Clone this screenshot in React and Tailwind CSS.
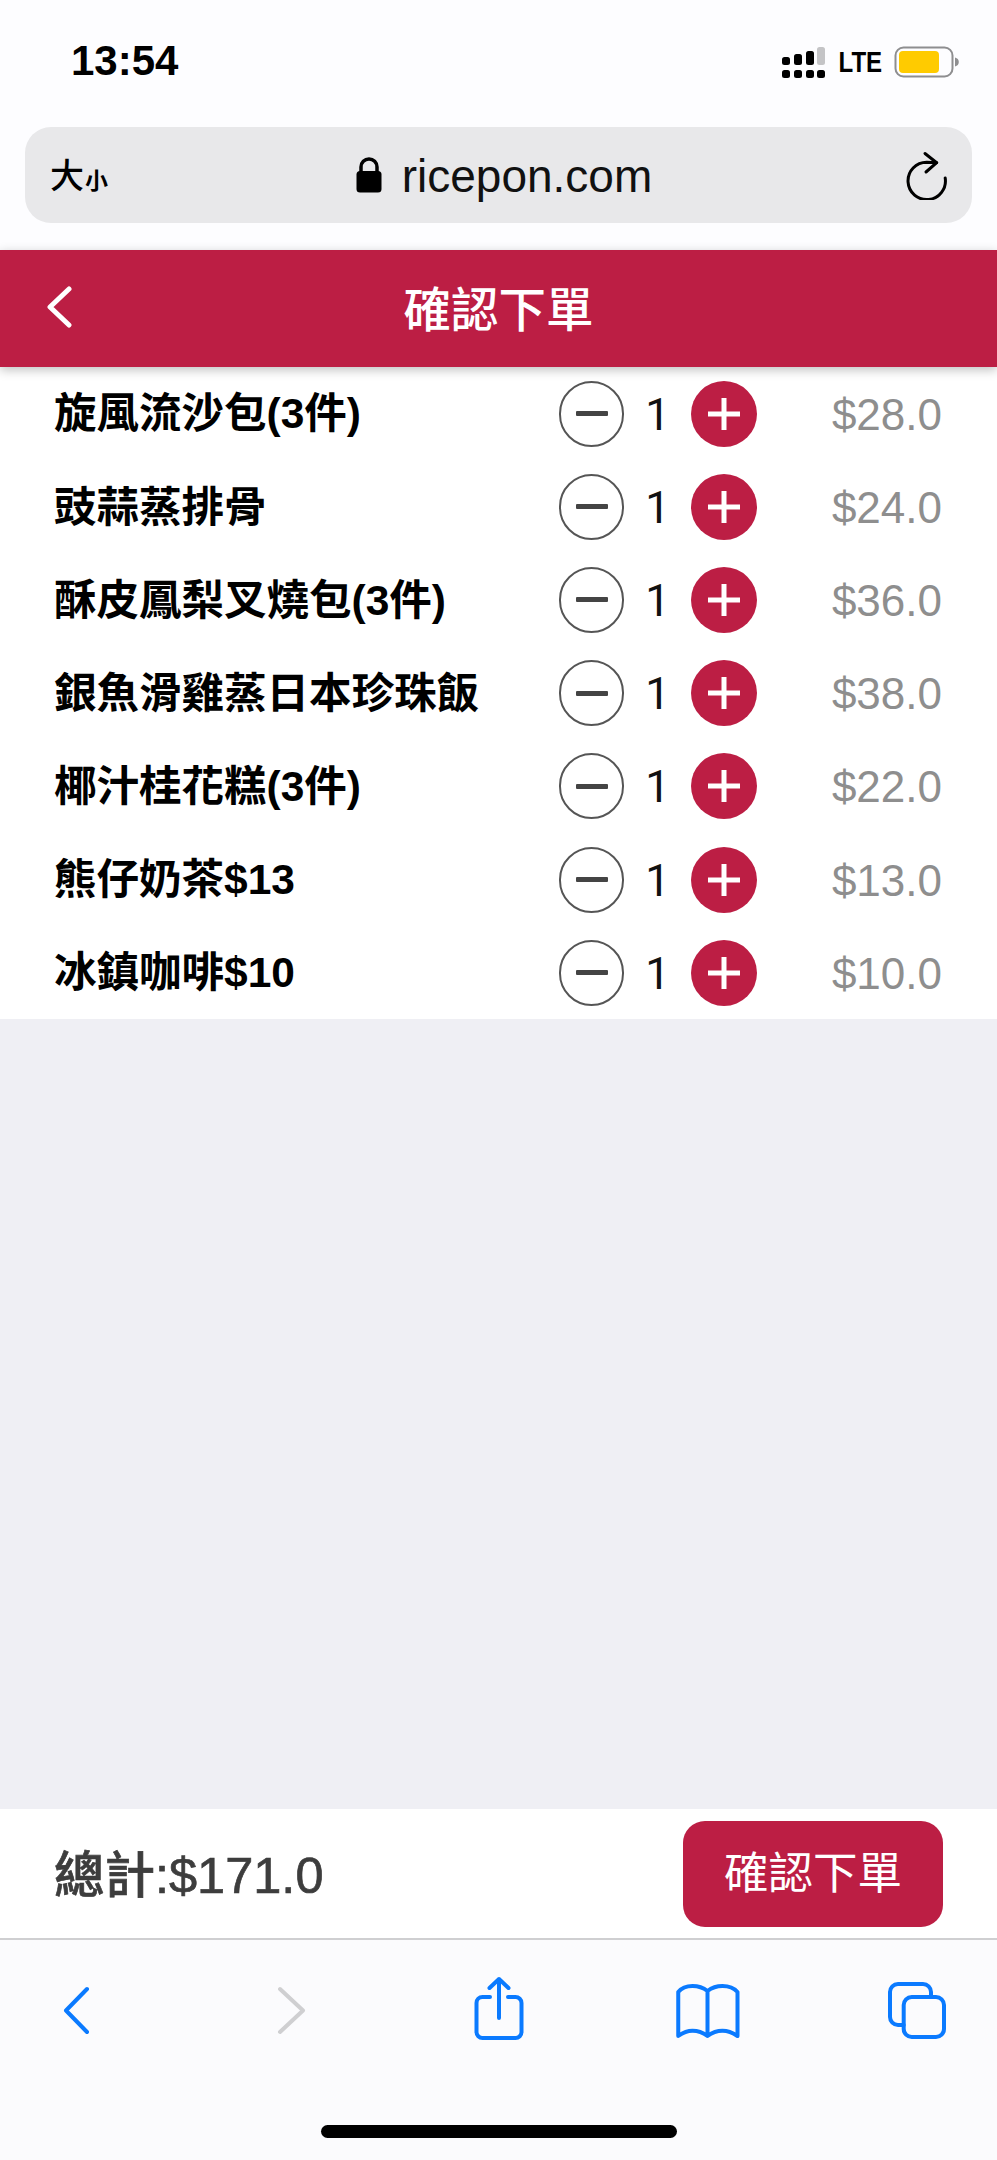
import React from 'react';

const SANS = "font-['Liberation_Sans','Noto_Sans_CJK_TC',sans-serif]";

const items = [
  { name: '旋風流沙包(3件)', price: '$28.0' },
  { name: '豉蒜蒸排骨', price: '$24.0' },
  { name: '酥皮鳳梨叉燒包(3件)', price: '$36.0' },
  { name: '銀魚滑雞蒸日本珍珠飯', price: '$38.0' },
  { name: '椰汁桂花糕(3件)', price: '$22.0' },
  { name: '熊仔奶茶$13', price: '$13.0' },
  { name: '冰鎮咖啡$10', price: '$10.0' },
];

const SignalIcon = () => (
  <svg width="44" height="31" viewBox="0 0 44 31" fill="#000">
    <rect x="0" y="10" width="8" height="8" rx="2.5" />
    <rect x="12" y="7" width="8" height="11" rx="2.5" />
    <rect x="24" y="4" width="8" height="14" rx="2.5" />
    <rect x="35" y="0" width="8" height="18" rx="2.5" fill="#c4c4c6" />
    <rect x="0" y="23" width="8" height="8" rx="2.5" />
    <rect x="12" y="23" width="8" height="8" rx="2.5" />
    <rect x="24" y="23" width="8" height="8" rx="2.5" />
    <rect x="35" y="23" width="8" height="8" rx="2.5" />
  </svg>
);

const BatteryIcon = () => (
  <svg width="65" height="32" viewBox="0 0 65 32">
    <rect x="1.5" y="1.5" width="57" height="29" rx="8" fill="none" stroke="#8e8e90" strokeWidth="2" />
    <rect x="5" y="5" width="40" height="22" rx="4" fill="#ffcb00" />
    <path d="M61 11.5c2.5.6 3.8 2.2 3.8 4.5s-1.3 3.9-3.8 4.5z" fill="#8e8e90" />
  </svg>
);

const LockIcon = () => (
  <svg width="26" height="36" viewBox="0 0 26 36">
    <path d="M5 16V10a8 8 0 0 1 16 0V16" fill="none" stroke="#000" strokeWidth="3.5" />
    <rect x="0.5" y="14" width="25" height="21.5" rx="3.5" fill="#000" />
  </svg>
);

const ReloadIcon = () => (
  <svg width="48" height="50" viewBox="0 0 48 50" fill="none" stroke="#000" strokeWidth="3" strokeLinecap="round" strokeLinejoin="round">
    <path d="M44.200 28A18.700 18.700 0 1 1 25.700 12.200L35.700 12.700" />
    <path d="M24 3.500 35.700 12.700 25 22" />
  </svg>
);

const MinusButton = () => (
  <div className="flex h-[66px] w-[65px] shrink-0 items-center justify-center rounded-full border-[2.5px] border-[#555555]">
    <div className="h-[5px] w-[32px] rounded-[1px] bg-[#444444]" />
  </div>
);

const PlusButton = () => (
  <div className="flex h-[66px] w-[66px] shrink-0 items-center justify-center rounded-full bg-[#bc1e44]">
    <svg width="32" height="32" viewBox="0 0 32 32" stroke="#fff" strokeWidth="5">
      <path d="M0 16h32M16 0v32" />
    </svg>
  </div>
);

const ItemRow = ({ name, price }) => (
  <div className="flex h-[93.2px] items-center pl-[54px] pr-[55px]">
    <div className="w-[505px] shrink-0 pt-[2px] text-[42.5px] leading-none font-bold whitespace-nowrap text-black">{name}</div>
    <MinusButton />
    <div className="w-[67px] shrink-0 pt-[2px] text-center font-['Roboto',sans-serif] text-[44px] leading-none text-[#111111]">1</div>
    <PlusButton />
    <div className="flex-1 pt-[2px] text-right text-[44px] leading-none text-[#8e8e8e]">{price}</div>
  </div>
);

const Toolbar = () => (
  <div className="flex h-[220px] shrink-0 flex-col bg-[#fbfbfd]">
    <div className="flex h-[185px] items-start justify-between px-[41px] pt-[36px]">
      <svg width="70" height="66" viewBox="0 0 70 66" fill="none" stroke="#0a7aff" strokeWidth="4" strokeLinecap="round" strokeLinejoin="round">
        <path d="M46 13 25 34.500 46 56" />
      </svg>
      <svg width="70" height="66" viewBox="0 0 70 66" fill="none" stroke="#cfcfd1" strokeWidth="4" strokeLinecap="round" strokeLinejoin="round">
        <path d="M28 13 51 34.500 28 56" />
      </svg>
      <svg width="70" height="66" viewBox="0 0 70 66" fill="none" stroke="#0a7aff" strokeWidth="4" strokeLinecap="round" strokeLinejoin="round">
        <path d="M26 21h-7.500a6 6 0 0 0-6 6v29a6 6 0 0 0 6 6h33a6 6 0 0 0 6-6V27a6 6 0 0 0-6-6H44" />
        <path d="M35 42V3M25.500 12 35 3l9.500 9" />
      </svg>
      <svg width="70" height="66" viewBox="0 0 70 66" fill="none" stroke="#0a7aff" strokeWidth="4" strokeLinecap="round" strokeLinejoin="round">
        <path d="M32.500 60V15C28 11.500 23 10 17.500 10 11 10 6.500 12 3.250 16V60C8 56.500 12 54.700 17.500 54.700 23 54.700 28 56.500 32.500 60 37 56.500 42 54.700 47.500 54.700 53 54.700 57.500 56.500 62.500 60V16C59 12 54 10 47.500 10 42 10 37 11.500 32.500 15" />
      </svg>
      <svg width="70" height="66" viewBox="0 0 70 66" fill="none" stroke="#0a7aff" strokeWidth="4" strokeLinecap="round" strokeLinejoin="round">
        <path d="M17.700 49H12a8 8 0 0 1-8-8V16a8 8 0 0 1 8-8h25a8 8 0 0 1 8 8v5" />
        <rect x="17.700" y="21" width="40.300" height="40" rx="8" />
      </svg>
    </div>
    <div className="flex justify-center">
      <div className="h-[13px] w-[356px] rounded-full bg-black" />
    </div>
  </div>
);

export default function App() {
  return (
    <div className={`flex h-[2160px] w-[997px] flex-col overflow-hidden bg-[#efeff4] ${SANS}`}>
      <div className="h-[250px] shrink-0 bg-[#fdfdff] px-[25px]">
        <div className="flex h-[127px] items-start justify-between pr-[13px] pl-[46px]">
          <div className="mt-[40px] text-[42px] leading-none font-bold text-black">13:54</div>
          <div className="mt-[46px] flex items-center">
            <SignalIcon />
            <span className="mx-[7.500px] scale-x-[0.83] text-[29px] leading-none font-bold text-black">LTE</span>
            <BatteryIcon />
          </div>
        </div>
        <div className="flex h-[96px] items-center justify-between rounded-[26px] bg-[#e8e8ea] pr-[23px] pl-[25px]">
          <div className="flex w-[57px] items-end pt-[2px] text-black">
            <span className="text-[34px] leading-none font-medium">大</span>
            <span className="ml-[1px] text-[23px] leading-none font-bold">小</span>
          </div>
          <div className="flex items-center gap-[20px]">
            <LockIcon />
            <span className="pt-[1px] text-[46px] leading-none text-[#111111]">ricepon.com</span>
          </div>
          <ReloadIcon />
        </div>
      </div>

      <div className="relative z-10 flex h-[117px] shrink-0 items-center justify-center bg-[#bc1e44] pt-[5px] shadow-[0_3px_10px_rgba(0,0,0,0.25)]">
        <svg className="absolute top-[36px] left-[46px]" width="26" height="42" viewBox="0 0 26 42" fill="none" stroke="#fff" strokeWidth="5" strokeLinecap="round" strokeLinejoin="round">
          <path d="M23 3 4 21l19 18" />
        </svg>
        <div className="text-[47.500px] leading-none font-medium text-white">確認下單</div>
      </div>

      <div className="shrink-0 bg-white">
        {items.map(item => (
          <ItemRow key={item.name} name={item.name} price={item.price} />
        ))}
      </div>

      <div className="flex-1" />

      <div className="flex h-[129px] shrink-0 items-center justify-between bg-white pr-[54px] pl-[54px]">
        <div className="pt-[5px] text-[50.500px] leading-none font-medium text-[#3d3d3d] [-webkit-text-stroke:0.7px_#3d3d3d]">總計:$171.0</div>
        <div className="flex h-[106px] w-[260px] items-center justify-center rounded-[22px] bg-[#bc1e44] pt-[2px] text-[44.500px] leading-none text-white">確認下單</div>
      </div>
      <div className="h-[2px] shrink-0 bg-[#cfcfd1]" />
      <Toolbar />
    </div>
  );
}
